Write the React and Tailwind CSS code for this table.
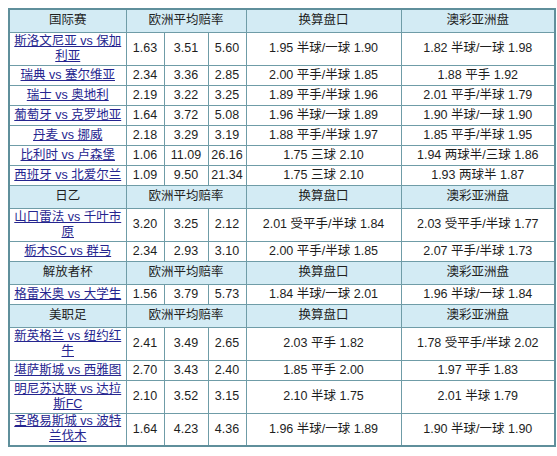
import React from 'react'

const sections = [
  {
    name: '国际赛',
    rows: [
      ['斯洛文尼亚 vs 保加利亚', '1.63', '3.51', '5.60', '1.95 半球/一球 1.90', '1.82 半球/一球 1.98', 2],
      ['瑞典 vs 塞尔维亚', '2.34', '3.36', '2.85', '2.00 平手/半球 1.85', '1.88 平手 1.92'],
      ['瑞士 vs 奥地利', '2.19', '3.22', '3.25', '1.89 平手/半球 1.96', '2.01 平手/半球 1.79'],
      ['葡萄牙 vs 克罗地亚', '1.64', '3.72', '5.08', '1.96 半球/一球 1.89', '1.90 半球/一球 1.90'],
      ['丹麦 vs 挪威', '2.18', '3.29', '3.19', '1.88 平手/半球 1.97', '1.85 平手/半球 1.95'],
      ['比利时 vs 卢森堡', '1.06', '11.09', '26.16', '1.75 三球 2.10', '1.94 两球半/三球 1.86'],
      ['西班牙 vs 北爱尔兰', '1.09', '9.50', '21.34', '1.75 三球 2.10', '1.93 两球半 1.87'],
    ],
  },
  {
    name: '日乙',
    rows: [
      ['山口雷法 vs 千叶市原', '3.20', '3.25', '2.12', '2.01 受平手/半球 1.84', '2.03 受平手/半球 1.77', 2],
      ['栃木SC vs 群马', '2.34', '2.93', '3.10', '2.00 平手/半球 1.85', '2.07 平手/半球 1.73'],
    ],
  },
  {
    name: '解放者杯',
    rows: [
      ['格雷米奥 vs 大学生', '1.56', '3.79', '5.73', '1.84 半球/一球 2.01', '1.96 半球/一球 1.84'],
    ],
  },
  {
    name: '美职足',
    rows: [
      ['新英格兰 vs 纽约红牛', '2.41', '3.49', '2.65', '2.03 平手 1.82', '1.78 受平手/半球 2.02', 2],
      ['堪萨斯城 vs 西雅图', '2.70', '3.43', '2.40', '1.85 平手 2.00', '1.97 平手 1.83'],
      ['明尼苏达联 vs 达拉斯FC', '2.10', '3.52', '3.15', '2.10 半球 1.75', '2.01 半球 1.79', 2],
      ['圣路易斯城 vs 波特兰伐木', '1.64', '4.23', '4.36', '1.96 半球/一球 1.89', '1.90 半球/一球 1.90', 2],
    ],
  },
]

const cell = 'border border-[#6f9ca7] text-center px-[2px] py-0'

export default function App() {
  return (
    <div className="bg-white w-[557px] h-[456px] pt-[8px] pl-[8px] text-[12.5px] text-[#1e1e1e] font-['Liberation_Sans','Noto_Sans_CJK_SC',sans-serif]">
      <table className="w-[546px] table-fixed border-collapse border-2 border-[#5f8f9b]">
        <colgroup>
          <col className="w-[117px]" />
          <col className="w-[38px]" />
          <col className="w-[44px]" />
          <col className="w-[38px]" />
          <col className="w-[155px]" />
          <col className="w-[154px]" />
        </colgroup>
        <tbody>
          {sections.map((s) => (
            <React.Fragment key={s.name}>
              <tr className="h-[23px] bg-[#d3ebf4]">
                <td className={cell}>{s.name}</td>
                <td className={cell} colSpan={3}>欧洲平均赔率</td>
                <td className={cell}>换算盘口</td>
                <td className={cell}>澳彩亚洲盘</td>
              </tr>
              {s.rows.map((r) => (
                <tr key={r[0]} className={r[6] === 2 ? 'h-[33px]' : 'h-[20px]'}>
                  <td className={`${cell} leading-[15px]`}>
                    <a href="#" className="text-[#25258f] underline">{r[0]}</a>
                  </td>
                  <td className={cell}>{r[1]}</td>
                  <td className={cell}>{r[2]}</td>
                  <td className={cell}>{r[3]}</td>
                  <td className={cell}>{r[4]}</td>
                  <td className={cell}>{r[5]}</td>
                </tr>
              ))}
            </React.Fragment>
          ))}
        </tbody>
      </table>
    </div>
  )
}
